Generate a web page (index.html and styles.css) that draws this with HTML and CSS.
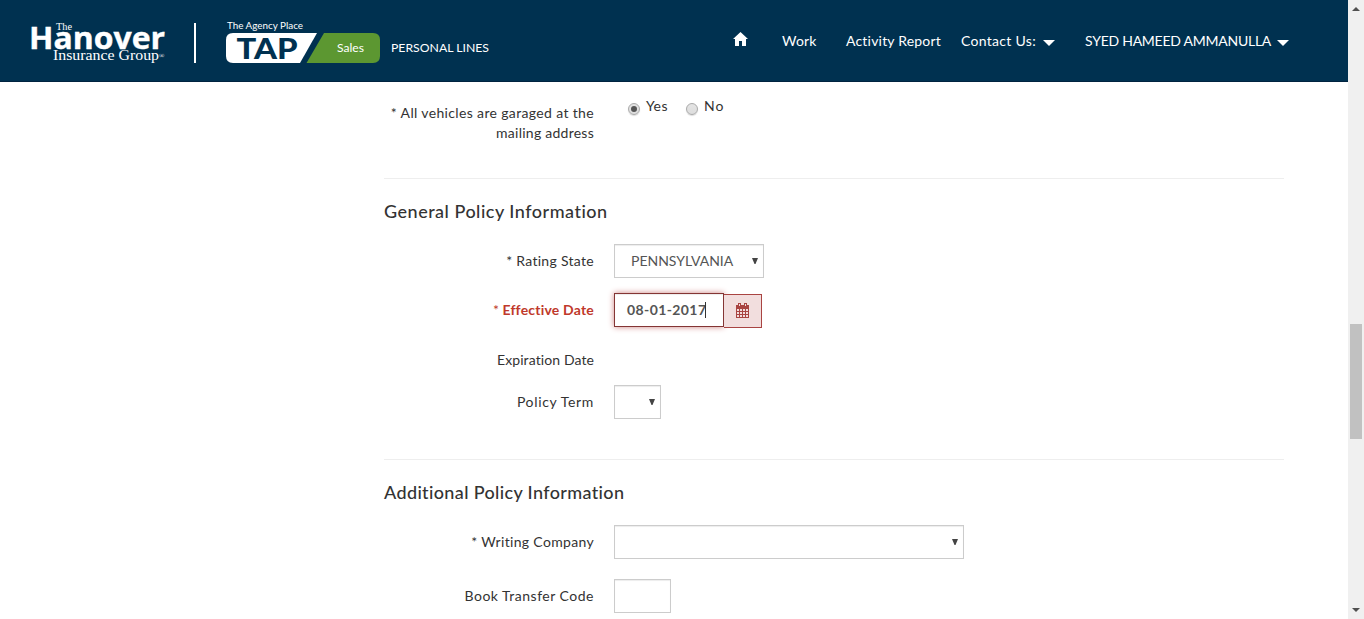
FILE: index.html
```html
<!DOCTYPE html>
<html lang="en">
<head>
<meta charset="utf-8">
<title>TAP Sales - Personal Lines</title>
<link rel="stylesheet" href="styles.css">
</head>
<body>
<div class="page">
  <header class="topbar">
    <svg class="brand" width="500" height="82" viewBox="0 0 500 82">
      <text class="serif" x="56" y="30" font-size="10" textLength="16" lengthAdjust="spacingAndGlyphs">The</text>
      <text class="hanover" x="29" y="49" font-size="31" textLength="136" lengthAdjust="spacingAndGlyphs">Hanover</text>
      <text class="serif" x="53" y="60" font-size="14" textLength="106" lengthAdjust="spacingAndGlyphs">Insurance Group</text>
      <text class="serif" x="159" y="58" font-size="7">®</text>
      <rect x="194" y="23" width="2" height="40" fill="#fff"/>
      <text class="sans" x="227" y="29" font-size="9" textLength="76" lengthAdjust="spacingAndGlyphs">The Agency Place</text>
      <path d="M233 33H317L300 63H233Q226 63 226 56V40Q226 33 233 33Z" fill="#fff"/>
      <path d="M324 33H373Q380 33 380 40V56Q380 63 373 63H306.500Z" fill="#5c9731"/>
      <text class="tap" x="236.500" y="59" font-size="29" textLength="61" lengthAdjust="spacingAndGlyphs">TAP</text>
      <text class="sans" x="337" y="52" font-size="11.500" textLength="27" lengthAdjust="spacingAndGlyphs">Sales</text>
      <text class="sans" x="391" y="52" font-size="11.500" textLength="98" lengthAdjust="spacingAndGlyphs">PERSONAL LINES</text>
    </svg>
    <nav class="nav">
      <a class="home"><svg width="15" height="14" viewBox="0 0 15 14"><path d="M7.500 0L15 7H13V14H9V9H6V14H2V7H0Z" fill="#fff"/></svg></a>
      <a class="work">Work</a>
      <a class="activity">Activity Report</a>
      <a class="contact">Contact Us:</a><svg class="caret" width="12" height="6" viewBox="0 0 12 6"><path d="M0 0H12L6 6Z" fill="#fff"/></svg>
      <a class="user">SYED HAMEED AMMANULLA</a><svg class="caret" width="12" height="6" viewBox="0 0 12 6"><path d="M0 0H12L6 6Z" fill="#fff"/></svg>
    </nav>
  </header>
  <main class="form">
    <section class="garage">
      <div class="row">
        <div class="label"><span class="l-all">* All vehicles are garaged at the</span><br><span class="l-mail">mailing address</span></div>
        <div class="radios"><i class="radio on"></i><span class="yes">Yes</span><i class="radio"></i><span class="no">No</span></div>
      </div>
    </section>
    <section class="general">
      <h2><span class="h-gen">General Policy Information</span></h2>
      <div class="row rating"><div class="label"><span class="l-rating">* Rating State</span></div><div class="control select state"><span class="penn">PENNSYLVANIA</span><svg class="arrow" width="6" height="6" viewBox="0 0 6 6"><path d="M0 0H6L3.500 6H2.500Z" fill="#444"/></svg></div></div>
      <div class="row effective"><div class="label error"><span class="star">*</span> <span class="l-eff">Effective Date</span></div><div class="control date"><span class="datetext">08-01-2017</span><i class="cursor"></i></div><div class="addon"><svg width="13" height="15" viewBox="0 0 13 15"><path d="M0 2H13V15H0Z" fill="#a94442"/><path d="M2 0H5V4H2ZM8 0H11V4H8Z" fill="#a94442"/><path d="M3 1H4V3H3ZM9 1H10V3H9Z" fill="#f2dede"/><path d="M1 6h2v2H1zM4 6h2v2H4zM7 6h2v2H7zM10 6h2v2h-2zM1 9h2v2H1zM4 9h2v2H4zM7 9h2v2H7zM10 9h2v2h-2zM1 12h2v2H1zM4 12h2v2H4zM7 12h2v2H7zM10 12h2v2h-2z" fill="#f2dede"/></svg></div></div>
      <div class="row expiration"><div class="label"><span class="l-exp">Expiration Date</span></div></div>
      <div class="row term"><div class="label"><span class="l-term">Policy Term</span></div><div class="control select short"><svg class="arrow" width="6" height="6" viewBox="0 0 6 6"><path d="M0 0H6L3.500 6H2.500Z" fill="#444"/></svg></div></div>
    </section>
    <section class="additional">
      <h2><span class="h-add">Additional Policy Information</span></h2>
      <div class="row company"><div class="label"><span class="l-comp">* Writing Company</span></div><div class="control select wide"><svg class="arrow" width="6" height="6" viewBox="0 0 6 6"><path d="M0 0H6L3.500 6H2.500Z" fill="#444"/></svg></div></div>
      <div class="row"><div class="label"><span class="l-book">Book Transfer Code</span></div><div class="control code"></div></div>
    </section>
  </main>
</div>
<aside class="scrollbar">
  <svg width="8" height="4" viewBox="0 0 8 4"><path d="M0 4H8L4 0Z" fill="#505050"/></svg>
  <div class="thumb"></div>
  <svg class="down" width="8" height="4" viewBox="0 0 8 4"><path d="M0 0H8L4 4Z" fill="#505050"/></svg>
</aside>
</body>
</html>
```
FILE: styles.css
```css
* { box-sizing: border-box; }
body { margin: 0; display: flex; height: 619px; overflow: hidden; background: #fff; color: #333; font: 14px/20px Lato, "Open Sans", sans-serif; white-space: nowrap; }
.page { width: 1348px; flex: none; }
.topbar { height: 82px; background: #003150; display: flex; color: #fff; border-bottom: 1px solid #00233f; }
.brand { flex: none; }
.brand text { fill: #fff; }
.brand .serif { font-family: "Liberation Serif", serif; }
.brand .hanover { font-family: "Open Sans", sans-serif; font-weight: 700; stroke: #fff; stroke-width: .4px; }
.brand .sans { font-family: Lato, sans-serif; }
.brand .tap { font-family: Lato, sans-serif; font-weight: 900; fill: #003150; }
.nav { display: flex; align-items: center; height: 82px; padding-left: 233px; }
.nav a { flex: none; }
.home { width: 49px; height: 18px; }
.home svg { display: block; }
.work { width: 64px; letter-spacing: .2px; }
.activity { width: 115px; letter-spacing: .2px; }
.contact { width: 82px; letter-spacing: .3px; }
.caret { margin-top: 3px; }
.user { width: 192px; margin-left: 30px; letter-spacing: -.25px; }

.form { padding-left: 384px; width: 1284px; }
.row { display: flex; align-items: center; height: 34px; }
.label { width: 210px; text-align: right; margin-right: 20px; flex: none; }
.l-all { letter-spacing: .35px; }
.l-mail { letter-spacing: .25px; }
.l-rating { letter-spacing: .3px; }
.l-eff { letter-spacing: .2px; }
.l-exp { letter-spacing: .1px; }
.l-term { letter-spacing: .65px; }
.l-comp { letter-spacing: .33px; }
.l-book { letter-spacing: .5px; }
.garage { height: 97px; padding-top: 21px; border-bottom: 1px solid #eee; }
.garage .row { height: 40px; align-items: flex-start; }
.radios { display: flex; align-items: center; padding-left: 14px; margin-top: -7px; letter-spacing: .4px; }
.radio { width: 12px; height: 12px; border: 1px solid #aaa; border-radius: 50%; background: linear-gradient(#e4e4e4, #ddd); margin-top: 5px; display: flex; align-items: center; justify-content: center; box-shadow: 0 1px 1px #ddd; }
.radio.on::after { content: ""; width: 6px; height: 6px; border-radius: 50%; background: #555; }
.yes { width: 40px; margin-left: 6px; flex: none; }
.no { margin-left: 6px; letter-spacing: 1px; }

h2 { margin: 0; padding-top: 22px; height: 65px; font-size: 18px; line-height: 20px; font-weight: 500; }
.h-gen { letter-spacing: .5px; }
.h-add { letter-spacing: .36px; }
.general { height: 281px; border-bottom: 1px solid #eee; }
.control { height: 34px; border: 1px solid #ccc; box-shadow: inset 0 1px 1px rgba(0,0,0,.075); display: flex; align-items: center; color: #555; flex: none; }
.select { justify-content: flex-end; padding-right: 5px; }
.arrow { margin-bottom: 1px; }
.state { width: 150px; padding-left: 16px; justify-content: space-between; letter-spacing: .45px; }
.penn { letter-spacing: 0; }
.effective { margin-top: 15px; }
.error { color: #c0392b; font-weight: 700; }
.star { font-weight: 400; }
.date { width: 110px; border-color: #843534; box-shadow: inset 0 1px 1px rgba(0,0,0,.075), 0 0 6px #ce8483; padding-left: 12px; font-weight: 700; }
.datetext { letter-spacing: .4px; }
.cursor { width: 1px; height: 16px; margin-left: -1px; background: #333; }
.addon { width: 38px; height: 34px; margin-top: 2px; border: 1px solid #a94442; border-left: 0; background: #f2dede; display: flex; align-items: center; justify-content: center; }
.addon svg { margin-bottom: 2px; }
.expiration { margin-top: 16px; }
.term { margin-top: 8px; }
.short { width: 47px; }
.wide { width: 350px; }
.company { margin-bottom: 20px; }
.code { width: 57px; }

.scrollbar { width: 16px; flex: none; height: 619px; background: #f0f0f0; display: flex; flex-direction: column; align-items: center; padding-top: 7px; }
.thumb { width: 12px; height: 115px; margin-top: 313px; background: #c1c1c1; }
.down { margin-top: 169px; }
```
